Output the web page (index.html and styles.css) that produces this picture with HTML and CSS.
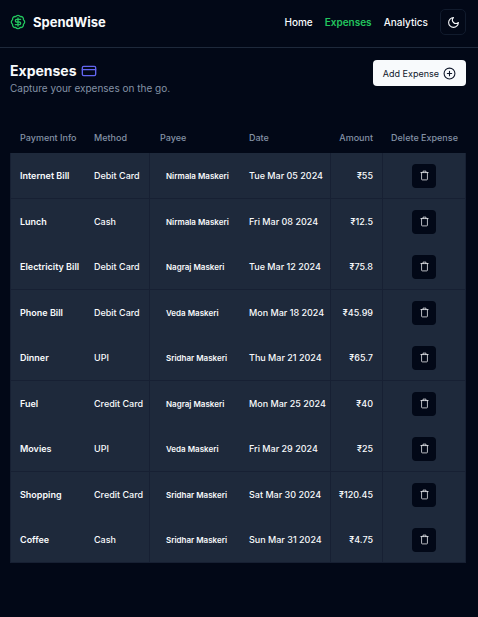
FILE: index.html
```html
<!DOCTYPE html>
<html lang="en">
<head>
<meta charset="utf-8">
<meta name="viewport" content="width=device-width, initial-scale=1">
<title>SpendWise</title>
<link rel="stylesheet" href="styles.css">
</head>
<body>
<header class="topbar">
  <a class="brand" href="#">
    <svg class="brand-icon" viewBox="0 0 24 24" aria-hidden="true"><path d="M3.85 8.62a4 4 0 0 1 4.78-4.77 4 4 0 0 1 6.74 0 4 4 0 0 1 4.78 4.78 4 4 0 0 1 0 6.74 4 4 0 0 1-4.77 4.78 4 4 0 0 1-6.75 0 4 4 0 0 1-4.78-4.77 4 4 0 0 1 0-6.76Z"/><path d="M16 8h-6a2 2 0 1 0 0 4h4a2 2 0 1 1 0 4H8"/><path d="M12 18V6"/></svg>
    <span>SpendWise</span>
  </a>
  <nav class="nav">
    <a href="#">Home</a>
    <a class="active" href="#">Expenses</a>
    <a href="#">Analytics</a>
    <button class="theme" type="button" aria-label="Toggle theme"><svg viewBox="0 0 24 24" aria-hidden="true"><path d="M12 3a6 6 0 0 0 9 9 9 9 0 1 1-9-9Z"/></svg></button>
  </nav>
</header>
<main class="page">
  <section class="heading">
    <div>
      <h1>Expenses <svg viewBox="0 0 24 24" aria-hidden="true"><rect width="20" height="14" x="2" y="5" rx="2"/><path d="M2 10h20"/></svg></h1>
      <p>Capture your expenses on the go.</p>
    </div>
    <button class="add" type="button">Add Expense <svg viewBox="0 0 24 24" aria-hidden="true"><circle cx="12" cy="12" r="10"/><path d="M8 12h8M12 8v8"/></svg></button>
  </section>
  <table class="expenses">
    <colgroup><col class="c-info"><col class="c-method"><col class="c-payee"><col class="c-date"><col class="c-amount"><col class="c-delete"></colgroup>
    <thead><tr><th>Payment Info</th><th>Method</th><th>Payee</th><th>Date</th><th class="amount">Amount</th><th class="delete">Delete Expense</th></tr></thead>
    <tbody id="rows"></tbody>
  </table>
</main>
<script src="script.js"></script>
</body>
</html>
```
FILE: styles.css
```css
* { box-sizing: border-box; }
body {
  margin: 0;
  min-height: 100vh;
  background: #020817;
  color: #f8fafc;
  font-family: Inter, "Liberation Sans", sans-serif;
  font-size: 9px;
}
svg {
  fill: none;
  stroke: currentColor;
  stroke-width: 2;
  stroke-linecap: round;
  stroke-linejoin: round;
}
a { color: inherit; text-decoration: none; }
button { font: inherit; cursor: pointer; }
.topbar {
  display: flex;
  align-items: center;
  justify-content: space-between;
  height: 48px;
  padding: 0 12px 3px 10px;
  border-bottom: 1px solid #1e293b;
}
.brand {
  display: flex;
  align-items: center;
  gap: 7px;
  font-size: 13px;
  font-weight: 700;
}
.brand-icon { width: 16px; height: 16px; color: #22c55e; }
.nav {
  display: flex;
  align-items: center;
  gap: 12px;
  font-size: 10px;
  font-weight: 500;
}
.active { color: #22c55e; font-weight: 600; }
.theme {
  display: grid;
  place-items: center;
  width: 26px;
  height: 26px;
  padding: 0;
  color: #f8fafc;
  background: transparent;
  border: 1px solid #111b2d;
  border-radius: 5px;
}
.theme svg { width: 13px; height: 13px; }
.page { padding: 12px 12px 40px 10px; }
.heading {
  display: flex;
  align-items: flex-start;
  justify-content: space-between;
}
h1 {
  display: flex;
  align-items: center;
  gap: 4px;
  margin: 0;
  font-size: 14px;
  line-height: 22px;
  font-weight: 700;
}
h1 svg { width: 16px; height: 16px; color: #6366f1; }
.heading p {
  margin: 0;
  color: #8492a6;
  font-size: 10px;
  line-height: 13px;
}
.add {
  display: flex;
  align-items: center;
  gap: 4px;
  height: 26px;
  padding: 0 10px;
  color: #0f172a;
  background: #f8fafc;
  border: 0;
  border-radius: 4px;
}
.add svg { width: 13px; height: 13px; }
.expenses {
  width: 100%;
  margin-top: 27px;
  table-layout: fixed;
  border-collapse: separate;
  border-spacing: 0;
}
.c-info { width: 74px; }
.c-method { width: 66px; }
.c-payee { width: 89px; }
.c-date { width: 92px; }
.c-amount { width: 52px; }
.c-delete { width: 83px; }
th, td {
  padding: 0 0 0 10px;
  text-align: left;
  white-space: nowrap;
  font-weight: 500;
}
th {
  height: 31px;
  color: #8492a6;
}
td {
  height: 45px;
  background: #1e293b;
}
tr:nth-child(odd) td { height: 46px; border-bottom: 1px solid #172033; }
td:first-child { border-left: 1px solid #172033; padding-left: 9px; font-weight: 600; }
td:nth-child(n+2):not(:nth-child(3)) { border-right: 1px solid #172033; }
.payee { padding-left: 16px; font-size: 8px; font-weight: 600; }
.amount { padding: 0 9px 0 0; text-align: right; }
th.amount { padding-right: 10px; }
.delete { padding: 0; text-align: center; }
.trash {
  display: grid;
  place-items: center;
  width: 24px;
  height: 24px;
  margin: 0 auto;
  padding: 0;
  color: #f8fafc;
  background: #020817;
  border: 0;
  border-radius: 4px;
}
.trash svg { width: 11px; height: 11px; stroke-width: 1; }
```
FILE: script.js
```js
const expenses = [
  ["Internet Bill", "Debit Card", "Nirmala Maskeri", "Tue Mar 05 2024", "55"],
  ["Lunch", "Cash", "Nirmala Maskeri", "Fri Mar 08 2024", "12.5"],
  ["Electricity Bill", "Debit Card", "Nagraj Maskeri", "Tue Mar 12 2024", "75.8"],
  ["Phone Bill", "Debit Card", "Veda Maskeri", "Mon Mar 18 2024", "45.99"],
  ["Dinner", "UPI", "Sridhar Maskeri", "Thu Mar 21 2024", "65.7"],
  ["Fuel", "Credit Card", "Nagraj Maskeri", "Mon Mar 25 2024", "40"],
  ["Movies", "UPI", "Veda Maskeri", "Fri Mar 29 2024", "25"],
  ["Shopping", "Credit Card", "Sridhar Maskeri", "Sat Mar 30 2024", "120.45"],
  ["Coffee", "Cash", "Sridhar Maskeri", "Sun Mar 31 2024", "4.75"]
];
const trash = '<svg viewBox="0 0 15 15" aria-hidden="true"><path d="M2.5 3.5h10M5.5 3.5v-2h4v2M3.5 3.5v9a1 1 0 0 0 1 1h6a1 1 0 0 0 1-1v-9"/></svg>';
document.getElementById("rows").innerHTML = expenses.map(([info, method, payee, date, amount]) =>
  `<tr><td>${info}</td><td>${method}</td><td class="payee">${payee}</td><td>${date}</td><td class="amount">₹${amount}</td><td class="delete"><button class="trash" type="button" aria-label="Delete ${info}">${trash}</button></td></tr>`
).join("");
```
